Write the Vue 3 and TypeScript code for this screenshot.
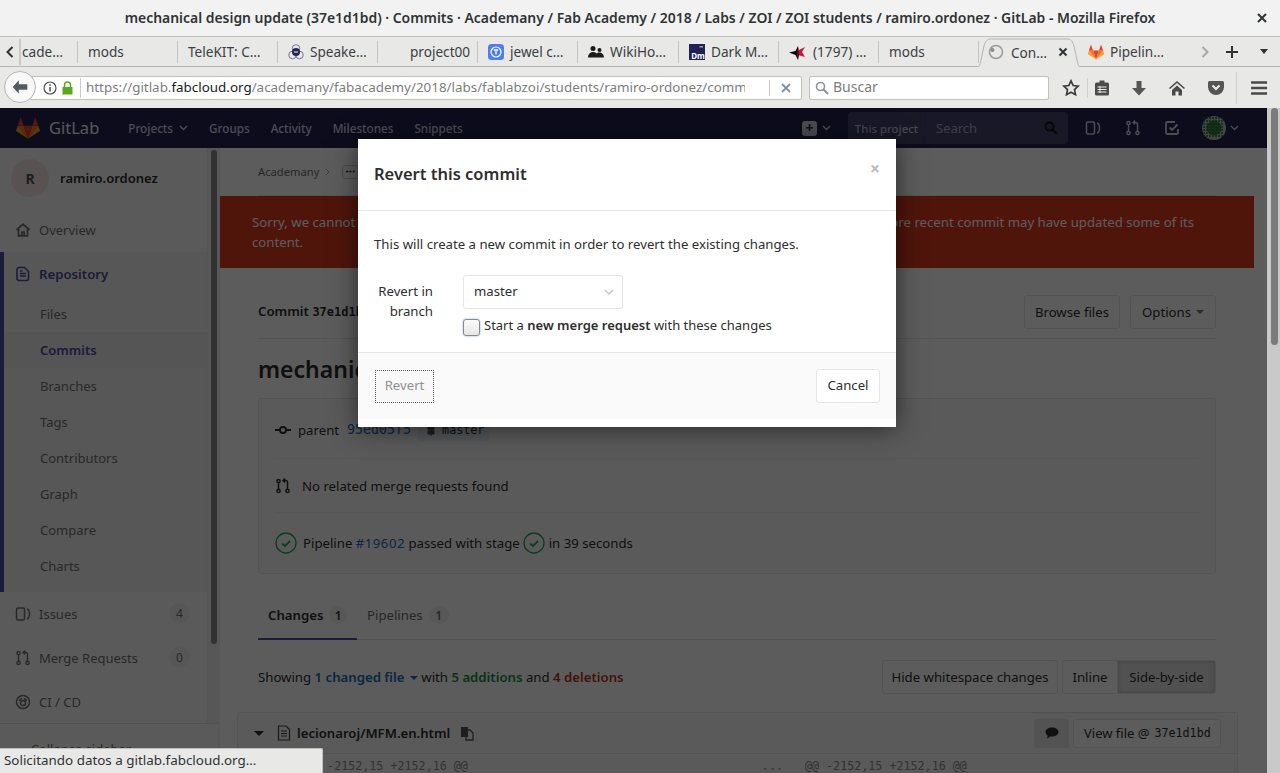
<script setup lang="ts">
const icons: Record<string, string> = {
  home: 'M1.500 8 8 2.200 14.500 8M3.500 7v6.800h9V7M6.800 13.800v-3.600h2.400v3.600',
  doc: 'M4 1.500h5.500l4 4V12.500a2 2 0 0 1-2 2H4a2 2 0 0 1-2-2v-9a2 2 0 0 1 2-2zM5 7.500h6M5 10h6M5 5h2.500',
  issue: 'M3 2h5a1.500 1.500 0 0 1 1.500 1.500v9A1.500 1.500 0 0 1 8 14H3a1.500 1.500 0 0 1-1.500-1.500v-9A1.500 1.500 0 0 1 3 2zM12 3c2 .6 2.500 2.400 2.500 5s-.5 4.400-2.500 5',
  merge: 'M3.500 4.700a1.600 1.600 0 1 0 0-3.200 1.600 1.600 0 0 0 0 3.200zM3.500 14.500a1.600 1.600 0 1 0 0-3.200 1.600 1.600 0 0 0 0 3.200zM3.500 4.700v6.600M12.500 14.500a1.600 1.600 0 1 0 0-3.200 1.600 1.600 0 0 0 0 3.200zM12.500 11.300V4a1.500 1.500 0 0 0-1.500-1.500H8M10 .5l-2 2 2 2',
  ci: 'M8 1.500a6.500 6.500 0 1 0 0 13 6.500 6.500 0 0 0 0-13zM8 6.500a2.500 2.500 0 1 0 0 5 2.500 2.500 0 0 0 0-5zM4.500 7A3.500 3.500 0 0 1 7 4.500M9 4.500A3.500 3.500 0 0 1 11.500 7',
}
const repoItems = ['Files', 'Commits', 'Branches', 'Tags', 'Contributors', 'Graph', 'Compare', 'Charts']
const navLinks = [
  { label: 'Projects', caret: true },
  { label: 'Groups', caret: false },
  { label: 'Activity', caret: false },
  { label: 'Milestones', caret: false },
  { label: 'Snippets', caret: false },
]
const tabs = [
  { label: 'cade…', icon: '', width: 58 },
  { label: 'mods', icon: '', width: 100 },
  { label: 'TeleKIT: C…', icon: '', width: 100 },
  { label: 'Speake…', icon: 'speaker', width: 100 },
  { label: 'project00', icon: 'blank', width: 100 },
  { label: 'jewel c…', icon: 'jewel', width: 100 },
  { label: 'WikiHo…', icon: 'wiki', width: 101 },
  { label: 'Dark M…', icon: 'dark', width: 100 },
  { label: '(1797) …', icon: 'star', width: 100 },
  { label: 'mods', icon: '', width: 100 },
]
const avatarDots: { x: number; y: number }[] = []
for (let x = 2; x <= 22; x += 3) {
  for (let y = 2; y <= 22; y += 3) {
    avatarDots.push({ x, y })
  }
}
</script>

<template>
  <div class="window">
    <header class="titlebar">
      <span class="title">mechanical design update (37e1d1bd) · Commits · Academany / Fab Academy / 2018 / Labs / ZOI / ZOI students / ramiro.ordonez · GitLab - Mozilla Firefox</span>
      <svg class="win-close" width="10" height="10" viewBox="0 0 10 10"><path d="M1 1l8 8M9 1l-8 8" stroke="#2e3436" stroke-width="2" /></svg>
    </header>

    <div class="tabbar">
      <svg class="tab-scroll" width="8" height="12" viewBox="0 0 8 12"><path d="M6.500 1 1.500 6l5 5" fill="none" stroke="#2e3436" stroke-width="2" /></svg>
      <div class="tab-fade"></div>
      <div v-for="(t, idx) in tabs" :key="t.label + t.width" class="tab" :class="{ first: idx === 0 }" :style="{ width: t.width + 'px' }">
        <svg v-if="t.icon === 'speaker'" width="16" height="16" viewBox="0 0 16 16"><circle cx="8" cy="4.500" r="3.800" fill="none" stroke="#5a5a8c" stroke-width=".8" /><circle cx="4.500" cy="11" r="3.800" fill="none" stroke="#5a5a8c" stroke-width=".8" /><circle cx="11.500" cy="11" r="3.800" fill="none" stroke="#5a5a8c" stroke-width=".8" /><circle cx="8" cy="8" r="4" fill="#26264e" /><path d="M6 7h4v2H6z" fill="#8b8bb5" /></svg>
        <span v-else-if="t.icon === 'blank'" class="blank-ic"></span>
        <svg v-else-if="t.icon === 'jewel'" width="16" height="16" viewBox="0 0 16 16"><rect width="16" height="16" rx="3.500" fill="#4f7cf0" /><circle cx="8" cy="8" r="5" fill="none" stroke="#fff" stroke-width="1.200" /><path d="M5.800 6h4.400M8 6v4.500" stroke="#fff" stroke-width="1.300" /></svg>
        <svg v-else-if="t.icon === 'wiki'" width="16" height="14" viewBox="0 0 16 14"><circle cx="5" cy="3.500" r="2.500" fill="#1b1b1b" /><circle cx="11.500" cy="5" r="2" fill="#1b1b1b" /><path d="M0 12.500C0 9.500 2 7 5 7c2 0 3 1 3.500 1.500C9 8 10 7.500 11.500 7.500 14 7.500 16 10 16 12.500z" fill="#1b1b1b" /></svg>
        <svg v-else-if="t.icon === 'dark'" width="16" height="16" viewBox="0 0 16 16"><rect width="16" height="16" fill="#1d2154" /><rect x="10.500" y="2" width="3.500" height="1.500" fill="#9a9ab5" /></svg>
        <svg v-else-if="t.icon === 'star'" width="18" height="18" viewBox="0 0 18 18"><path d="M0 9.500 6.500 8 9 3v14l-2.500-5z" fill="#000" /><path d="M9 3l1 4 6-3-3 5 3 5-7-2-1 5z" fill="#d0103a" /><path d="M9 3v14l1-5-1-5z" fill="#000" /></svg>
        <span v-if="t.icon === 'dark'" class="dm-text">Dm</span>
        <span class="tab-label">{{ t.label }}</span>
      </div>
      <div class="tab-active">
        <svg class="tab-shape" width="112" height="31" viewBox="0 0 112 31"><path d="M0 30h2c4 0 5-3 6-8l3-14c1-4 3-7 7-7h76c4 0 6 3 7 7l3 14c1 5 2 8 6 8h2" fill="#e8e8e7" stroke="#b5b5b3" /></svg>
        <svg class="spinner" width="16" height="16" viewBox="0 0 16 16"><circle cx="8" cy="8" r="6.500" fill="none" stroke="#9a9a9a" stroke-width="1.500" /><circle cx="4.500" cy="6" r="2" fill="#8c8c8c" /></svg>
        <span class="tab-label">Con…</span>
        <svg class="tab-x" width="10" height="10" viewBox="0 0 10 10"><path d="M1.500 1.500l7 7M8.500 1.500l-7 7" stroke="#2e3436" stroke-width="2" /></svg>
      </div>
      <div class="tab-pipe">
        <svg width="18" height="18" viewBox="0 0 24 24"><path d="M12 22 16 10H8z" fill="#e24329" /><path d="M12 22 8 10H2.500z" fill="#fc6d26" /><path d="M2.500 10 1 14.600l11 7.400z" fill="#fca326" /><path d="M2.500 10H8L5.300 2z" fill="#e24329" /><path d="M12 22l4-12h5.500z" fill="#fc6d26" /><path d="M21.500 10 23 14.600 12 22z" fill="#fca326" /><path d="M21.500 10H16l2.700-8z" fill="#e24329" /></svg>
        <span class="tab-label">Pipelin…</span>
      </div>
      <div class="tab-tools">
        <svg width="8" height="12" viewBox="0 0 8 12"><path d="M1.500 1l5 5-5 5" fill="none" stroke="#a8a8a8" stroke-width="2" /></svg>
        <svg width="14" height="14" viewBox="0 0 14 14"><path d="M7 1v12M1 7h12" stroke="#2e3436" stroke-width="2" /></svg>
        <svg width="8" height="5" viewBox="0 0 8 5"><path d="M0 0h8L4 5z" fill="#2e3436" /></svg>
      </div>
    </div>

    <div class="navbar">
      <div class="back"><svg width="18" height="16" viewBox="0 0 16 14"><path d="M7 1 1.500 7 7 13V9.500h7.500v-5H7z" fill="#55595c" /></svg></div>
      <div class="urlbar">
        <svg width="14" height="14" viewBox="0 0 14 14"><circle cx="7" cy="7" r="6" fill="none" stroke="#4c4c4c" stroke-width="1.200" /><path d="M7 6v4.500M7 3.200v1.500" stroke="#4c4c4c" stroke-width="1.500" /></svg>
        <svg class="lock" width="11" height="14" viewBox="0 0 11 14"><path d="M0.500 6h10v7.500H.5z" fill="#5ca51e" /><path d="M2.500 6.500V4a3 3 0 0 1 6 0v2.500" fill="none" stroke="#5ca51e" stroke-width="1.500" /></svg>
        <span class="url-sep"></span>
        <span class="url"><span class="u-dim">https://gitlab.</span><span class="u-main">fabcloud.org</span><span class="u-dim">/academany/fabacademy/2018/labs/fablabzoi/students/ramiro-ordonez/commit/37e1d1bd</span></span>
        <span class="url-sep2"></span>
        <svg width="10" height="10" viewBox="0 0 10 10"><path d="M1 1l8 8M9 1l-8 8" stroke="#7a8fa8" stroke-width="1.800" /></svg>
      </div>
      <div class="searchbar">
        <svg width="14" height="14" viewBox="0 0 14 14"><circle cx="5.500" cy="5.500" r="4" fill="none" stroke="#8d9296" stroke-width="1.600" /><path d="M8.500 8.500l4.500 4.500" stroke="#8d9296" stroke-width="2" /></svg>
        <span>Buscar</span>
      </div>
      <div class="tools">
        <svg class="t-star" width="18" height="18" viewBox="0 0 18 18"><path d="M9 1.800l2.200 4.700 5 .6-3.700 3.500 1 5.100L9 13.200l-4.500 2.500 1-5.100L1.800 7.100l5-.6z" fill="none" stroke="#3b3b3b" stroke-width="1.700" /></svg>
        <span class="t-sep"></span>
        <svg class="t-clip" width="14" height="16" viewBox="0 0 14 16"><rect x="0" y="2.500" width="14" height="13" rx="1.500" fill="#4a4a4a" /><rect x="4.500" y=".5" width="5" height="3" fill="#4a4a4a" /><path d="M2.500 7h9M2.500 9.500h9M2.500 12h9M5 6v7" stroke="#e8e8e7" stroke-width="1" /></svg>
        <svg class="t-down" width="14" height="16" viewBox="0 0 14 16"><path d="M4.500 1h5v7H14l-7 7.500L0 8h4.500z" fill="#555" /></svg>
        <svg class="t-home" width="16" height="16" viewBox="0 0 16 16"><path d="M8 1 0 8l1 1 7-6 7 6 1-1z" fill="#4a4a4a" /><path d="M3 10 8 5.500 13 10v5.500H9.500v-4h-3v4H3z" fill="#4a4a4a" /></svg>
        <svg class="t-pocket" width="16" height="15" viewBox="0 0 16 15"><path d="M1.500 1h13A1.500 1.500 0 0 1 16 2.500V7a8 8 0 0 1-16 0V2.500A1.500 1.500 0 0 1 1.500 1z" fill="#555" /><path d="M4.500 5.500 8 9l3.500-3.500" fill="none" stroke="#e8e8e7" stroke-width="2.200" /></svg>
        <span class="t-sep2"></span>
        <svg class="t-menu" width="16" height="14" viewBox="0 0 16 14"><path d="M0 1.500h16M0 7h16M0 12.500h16" stroke="#4a4a4a" stroke-width="2.500" /></svg>
      </div>
    </div>

    <div class="viewport">
      <div class="page">
        <div class="gl-nav">
          <svg class="gl-logo" width="28" height="26" viewBox="0 0 24 24"><path d="M12 22 16 10H8z" fill="#e24329" /><path d="M12 22 8 10H2.500z" fill="#fc6d26" /><path d="M2.500 10 1 14.600l11 7.400z" fill="#fca326" /><path d="M2.500 10H8L5.300 2z" fill="#e24329" /><path d="M12 22l4-12h5.500z" fill="#fc6d26" /><path d="M21.500 10 23 14.600 12 22z" fill="#fca326" /><path d="M21.500 10H16l2.700-8z" fill="#e24329" /></svg>
          <span class="gl-name">GitLab</span>
          <div class="gl-links">
            <span v-for="l in navLinks" :key="l.label" class="gl-link">{{ l.label }}<svg v-if="l.caret" width="9" height="6" viewBox="0 0 9 6"><path d="M1 1l3.500 3.500L8 1" fill="none" stroke="#d4d4e4" stroke-width="1.300" /></svg></span>
          </div>
          <div class="gl-right">
            <span class="plus-box">+</span>
            <svg class="gl-chev" width="9" height="6" viewBox="0 0 9 6"><path d="M1 1l3.500 3.500L8 1" fill="none" stroke="#d4d4e4" stroke-width="1.300" /></svg>
            <div class="gl-search">
              <span class="this-project">This project</span>
              <span class="s-ph">Search</span>
              <svg width="14" height="14" viewBox="0 0 14 14"><circle cx="5.500" cy="5.500" r="4" fill="none" stroke="#111" stroke-width="2" /><path d="M8.500 8.500l4 4" stroke="#111" stroke-width="2.400" /></svg>
            </div>
            <svg class="gl-i1" width="16" height="16" viewBox="0 0 16 16"><path :d="icons.issue" fill="none" stroke="#d4d4e4" stroke-width="1.500" /></svg>
            <svg class="gl-i2" width="16" height="16" viewBox="0 0 16 16"><path :d="icons.merge" fill="none" stroke="#d4d4e4" stroke-width="1.400" /></svg>
            <svg class="gl-i3" width="16" height="16" viewBox="0 0 16 16"><path d="M14 9v3.500a1.500 1.500 0 0 1-1.500 1.500h-9A1.500 1.500 0 0 1 2 12.500v-9A1.500 1.500 0 0 1 3.500 2H11M5.500 7.500l2.500 2.500 5.500-5.500" fill="none" stroke="#d4d4e4" stroke-width="1.800" /></svg>
            <svg class="gl-av" width="24" height="24" viewBox="0 0 24 24"><circle cx="12" cy="12" r="12" fill="#bdbdb5" /><circle cx="12" cy="12" r="7.500" fill="#2f8a3f" /><circle v-for="d in avatarDots" :key="d.x + '-' + d.y" :cx="d.x" :cy="d.y" r=".9" fill="#1d6a2a" /></svg>
            <svg class="gl-chev2" width="9" height="6" viewBox="0 0 9 6"><path d="M1 1l3.500 3.500L8 1" fill="none" stroke="#d4d4e4" stroke-width="1.300" /></svg>
          </div>
        </div>

        <div class="gl-body">
          <aside class="sidebar">
            <div class="side-inner">
              <div class="context"><span class="ctx-av">R</span><span class="ctx-name">ramiro.ordonez</span></div>
              <div class="side-row top"><svg width="16" height="16" viewBox="0 0 16 16"><path :d="icons.home" fill="none" stroke="#707070" stroke-width="1.700" /></svg><span>Overview</span></div>
              <div class="repo">
                <div class="repo-head"><svg width="16" height="16" viewBox="0 0 16 16"><path :d="icons.doc" fill="none" stroke="#4b4ba3" stroke-width="1.600" /></svg><span>Repository</span></div>
                <div v-for="i in repoItems" :key="i" class="repo-item" :class="{ on: i === 'Commits' }">{{ i }}</div>
              </div>
              <div class="side-row tall"><svg width="16" height="16" viewBox="0 0 16 16"><path :d="icons.issue" fill="none" stroke="#707070" stroke-width="1.500" /></svg><span>Issues</span><em>4</em></div>
              <div class="side-row tall"><svg width="16" height="16" viewBox="0 0 16 16"><path :d="icons.merge" fill="none" stroke="#707070" stroke-width="1.400" /></svg><span>Merge Requests</span><em>0</em></div>
              <div class="side-row tall"><svg width="16" height="16" viewBox="0 0 16 16"><path :d="icons.ci" fill="none" stroke="#707070" stroke-width="1.500" /></svg><span>CI / CD</span></div>
              <div class="collapse"><span class="coll-ic">«</span><span>Collapse sidebar</span></div>
            </div>
            <div class="side-track"><div class="side-thumb"></div></div>
          </aside>

          <main class="main">
            <div class="crumbs">
              <span>Academany</span>
              <svg width="6" height="8" viewBox="0 0 6 8"><path d="M1 1l3 3-3 3" fill="none" stroke="#aaa" stroke-width="1" /></svg>
              <span class="crumb-more"><svg width="9" height="3" viewBox="0 0 9 3"><circle cx="1.200" cy="1.500" r="1.100" fill="#2e2e2e" /><circle cx="4.500" cy="1.500" r="1.100" fill="#2e2e2e" /><circle cx="7.800" cy="1.500" r="1.100" fill="#2e2e2e" /></svg></span>
            </div>
            <div class="alert">Sorry, we cannot revert this commit automatically. This commit may already have been reverted, or a more recent commit may have updated some of its content.</div>

            <div class="container">
              <div class="commit-head">
                <div class="commit-id">Commit <code>37e1d1bd</code></div>
                <div class="head-btns"><span class="btn">Browse files</span><span class="btn opt">Options <i class="caret"></i></span></div>
              </div>
              <h3 class="commit-title">mechanical design update</h3>

              <section class="info">
                <div class="info-row r1">
                  <svg width="16" height="16" viewBox="0 0 16 16"><circle cx="8" cy="8" r="3" fill="none" stroke="#2e2e2e" stroke-width="1.800" /><path d="M0 8h5M11 8h5" stroke="#2e2e2e" stroke-width="1.800" /></svg>
                  <span class="p-lbl">parent</span><code class="p-hash">95ed05f5</code>
                  <span class="p-branch"><svg width="8" height="12" viewBox="0 0 8 12"><path d="M4 0v12M1 3h6v3H1zM1 7h6v3H1z" fill="#555" stroke="#555" /></svg><code>master</code></span>
                </div>
                <div class="info-row r2">
                  <svg width="16" height="16" viewBox="0 0 16 16"><path :d="icons.merge" fill="none" stroke="#2e2e2e" stroke-width="1.500" /></svg>
                  <span class="p-mr">No related merge requests found</span>
                </div>
                <div class="info-row r3">
                  <svg class="chk" width="22" height="22" viewBox="0 0 22 22"><circle cx="11" cy="11" r="10" fill="none" stroke="#1aaa55" stroke-width="1.300" /><path d="M7 11.500l3 2.500 5-5" fill="none" stroke="#1aaa55" stroke-width="1.800" /></svg>
                  <span class="p-pipe">Pipeline <a>#19602</a> passed with stage</span>
                  <svg class="chk c2" width="22" height="22" viewBox="0 0 22 22"><circle cx="11" cy="11" r="10" fill="none" stroke="#1aaa55" stroke-width="1.300" /><path d="M7 11.500l3 2.500 5-5" fill="none" stroke="#1aaa55" stroke-width="1.800" /></svg>
                  <span class="p-time">in 39 seconds</span>
                </div>
              </section>

              <div class="subtabs">
                <div class="subtab on">Changes <b>1</b></div>
                <div class="subtab">Pipelines <b>1</b></div>
              </div>

              <div class="stats">
                <div class="stat-text">Showing <a class="lnk">1 changed file <i class="caret blue"></i></a> with <strong class="add">5 additions</strong> and <strong class="del">4 deletions</strong></div>
                <div class="stat-btns">
                  <span class="btn b-hide">Hide whitespace changes</span>
                  <div class="seg"><span class="btn b-inline">Inline</span><span class="btn pressed">Side-by-side</span></div>
                </div>
              </div>
            </div>

            <section class="file">
              <div class="file-head">
                <i class="caret dark"></i>
                <svg class="f-ic" width="14" height="16" viewBox="0 0 14 16"><path d="M1.500 1h7.500l3.500 3.500V15h-11zM4 6h6M4 8.500h6M4 11h6" fill="none" stroke="#444" stroke-width="1.200" /></svg>
                <strong>lecionaroj/MFM.en.html</strong>
                <svg class="f-copy" width="14" height="16" viewBox="0 0 14 16"><path d="M1 2h7v10H1z" fill="#555" /><path d="M6 5h4l3 3v7H6z" fill="none" stroke="#555" stroke-width="1.300" /></svg>
                <span class="btn cmt"><svg width="14" height="12" viewBox="0 0 14 12"><path d="M7 .5c3.600 0 6.500 2 6.500 4.500S10.600 9.500 7 9.500c-.6 0-1.200 0-1.700-.2C4.300 10.500 2.800 11.200 1.500 11.400c.7-.8 1.200-1.800 1.200-2.800C1.300 7.800.5 6.500.5 5 .5 2.500 3.400.500 7 .5z" fill="#2e2e2e" /></svg></span>
                <span class="btn vf">View file @ <code>37e1d1bd</code></span>
              </div>
              <div class="diff-line">
                <code class="d-left">@@ -2152,15 +2152,16 @@</code>
                <code class="d-dots">...</code>
                <code class="d-right">@@ -2152,15 +2152,16 @@</code>
              </div>
            </section>
          </main>
        </div>
      </div>

      <div class="backdrop"></div>

      <div class="modal">
        <div class="m-head"><h4>Revert this commit</h4><span class="m-x">×</span></div>
        <div class="m-body">
          <p>This will create a new commit in order to revert the existing changes.</p>
          <div class="m-form">
            <label>Revert in branch</label>
            <div class="m-fields">
              <div class="m-select"><span>master</span><svg width="10" height="6" viewBox="0 0 10 6"><path d="M1 1l4 4 4-4" fill="none" stroke="#c4c4c4" stroke-width="1.300" /></svg></div>
              <div class="m-check"><span class="box"></span><span>Start a <strong>new merge request</strong> with these changes</span></div>
            </div>
          </div>
        </div>
        <div class="m-foot"><span class="m-revert">Revert</span><span class="m-cancel">Cancel</span></div>
      </div>

      <div class="scroll"><div class="scroll-thumb"></div></div>
      <div class="status">Solicitando datos a gitlab.fabcloud.org…</div>
    </div>
  </div>
</template>

<style>
html, body { margin: 0; padding: 0; overflow: hidden; }
</style>

<style scoped>
.window { width: 1280px; height: 773px; overflow: hidden; display: flex; flex-direction: column; font-family: "Noto Sans", sans-serif; font-size: 13.2px; color: #2e2e2e; background: #e8e8e7; }
code { font-family: "DejaVu Sans Mono", monospace; font-size: 12px; }

.titlebar { height: 36px; flex: none; background: #f2f2f2; border-bottom: 1px solid #bfbfbd; display: flex; align-items: center; justify-content: center; position: relative; box-sizing: content-box; }
.title { font-size: 13.93px; font-weight: 600; color: #2e3436; white-space: nowrap; padding-bottom: 2px; }
.win-close { position: absolute; right: 13px; top: 13px; }

.tabbar { height: 29px; flex: none; display: flex; align-items: center; background: #e8e8e7; border-bottom: 1px solid #b5b5b3; position: relative; padding-left: 20px; box-sizing: content-box; font-size: 13.6px; color: #3b3f41; }
.tab-scroll { position: absolute; left: 6px; top: 9px; }
.tab-fade { position: absolute; left: 19px; top: 2px; width: 2px; height: 26px; background: #c9c9c7; }
.tab { height: 22px; flex: none; display: flex; align-items: center; gap: 6px; box-sizing: border-box; border-right: 1px solid #c4c4c2; padding-left: 10px; white-space: nowrap; overflow: hidden; position: relative; }
.tab.first { padding-left: 2px; }
.blank-ic { width: 16px; height: 16px; }
.dm-text { position: absolute; left: 11px; top: 11px; width: 16px; text-align: center; color: #fff; font-size: 8px; font-weight: 700; line-height: 8px; }
.tab-active { width: 101px; height: 29px; flex: none; display: flex; align-items: center; position: relative; margin-bottom: -1px; }
.tab-shape { position: absolute; left: -6px; top: 0; }
.spinner { position: relative; margin-left: 9px; }
.tab-active .tab-label { position: relative; margin-left: 7px; }
.tab-x { position: relative; margin-left: 11px; }
.tab-pipe { width: 106px; flex: none; display: flex; align-items: center; gap: 5px; padding-left: 7px; box-sizing: border-box; }
.tab-tools { display: flex; align-items: center; }
.tab-tools svg:nth-child(1) { margin-left: 15px; }
.tab-tools svg:nth-child(2) { margin-left: 16px; }
.tab-tools svg:nth-child(3) { margin-left: 21px; }

.navbar { height: 41px; flex: none; display: flex; align-items: center; background: #e8e8e7; position: relative; padding-left: 30px; box-sizing: border-box; }
.back { position: absolute; left: 4px; top: 4px; width: 32px; height: 32px; border-radius: 50%; background: #f8f8f8; border: 1px solid #b5b5b3; box-sizing: border-box; display: flex; align-items: center; justify-content: center; z-index: 1; }
.urlbar { width: 772px; height: 24px; box-sizing: border-box; background: #fff; border: 1px solid #c0c0be; border-radius: 0 2px 2px 0; display: flex; align-items: center; padding: 0 10px 0 12px; font-size: 13.4px; white-space: nowrap; }
.lock { margin-left: 5px; }
.url-sep { width: 1px; height: 20px; background: #ccc; margin: 0 5px 0 7px; flex: none; }
.url { flex: 1; overflow: hidden; white-space: nowrap; padding-bottom: 2px; }
.u-dim { color: #7d7d7d; }
.u-main { color: #1a1a1a; }
.url-sep2 { width: 1px; height: 16px; background: #c8c8c8; margin: 0 11px 0 24px; flex: none; }
.searchbar { margin-left: 7px; width: 240px; height: 24px; box-sizing: border-box; background: #fff; border: 1px solid #c0c0be; border-radius: 2px; display: flex; align-items: center; gap: 4px; padding-left: 5px; font-size: 14px; color: #7d7d7d; }
.searchbar span { padding-bottom: 2px; }
.tools { display: flex; align-items: center; margin-left: 13px; position: relative; }
.t-sep { width: 1px; height: 20px; background: #cfcfcd; margin: 0 7px; }
.t-down { margin-left: 23px; }
.t-home { margin-left: 23px; }
.t-pocket { margin-left: 23px; }
.t-sep2 { width: 1px; height: 32px; background: #cfcfcd; margin-left: 12px; }
.t-menu { margin-left: 14px; }

.viewport { flex: 1; position: relative; overflow: hidden; background: #fff; }
.page { position: absolute; inset: 0 13px 0 0; overflow: hidden; display: flex; flex-direction: column; background: #fff; }
.backdrop { position: absolute; inset: 0 13px 0 0; background: rgba(0, 0, 0, .64); }

.gl-nav { height: 40px; flex: none; background: #252350; display: flex; align-items: center; color: #d4d4e4; font-size: 11.7px; font-weight: 500; padding-left: 14px; }
.gl-name { font-size: 16.5px; font-weight: 400; margin-left: 7px; color: #f0f0f4; padding-bottom: 2px; }
.gl-links { display: flex; margin-left: 29px; gap: 21px; }
.gl-link { display: flex; align-items: center; gap: 6px; white-space: nowrap; }
.gl-right { margin-left: auto; display: flex; align-items: center; }
.plus-box { width: 15px; height: 15px; border-radius: 3px; background: #d4d4e4; color: #252350; font-weight: 700; font-size: 14px; display: flex; align-items: center; justify-content: center; line-height: 1; }
.gl-chev { margin-left: 5px; }
.gl-search { width: 220px; height: 32px; margin-left: 17px; border-radius: 4px; background: #45446e; display: flex; align-items: center; }
.this-project { width: 78px; height: 32px; box-sizing: border-box; border-right: 1px solid #3d3c78; display: flex; align-items: center; justify-content: center; color: #c4c4d8; white-space: nowrap; font-size: 11.4px; }
.s-ph { margin-left: 10px; font-size: 13px; font-weight: 400; color: #a8a8c8; flex: 1; }
.gl-search svg { margin-right: 10px; }
.gl-i1 { margin-left: 17px; }
.gl-i2 { margin-left: 24px; }
.gl-i3 { margin-left: 23px; }
.gl-av { margin-left: 22px; }
.gl-chev2 { margin-left: 4px; margin-right: 28px; }

.gl-body { flex: 1; display: flex; min-height: 0; }
.sidebar { width: 220px; flex: none; display: flex; background: #fafafa; position: relative; overflow: hidden; }
.side-inner { width: 207px; flex: none; height: 100%; display: flex; flex-direction: column; font-size: 13px; color: #707070; overflow: hidden; }
.side-track { width: 13px; flex: none; background: #f2f2f2; border-left: 1px solid #ececec; box-sizing: border-box; display: flex; justify-content: center; }
.side-thumb { width: 6px; height: 494px; background: #8a8a8a; border-radius: 3px; margin-top: 2px; }
.context { height: 60px; flex: none; display: flex; align-items: center; padding-left: 11px; box-sizing: border-box; }
.ctx-av { width: 38px; height: 38px; border-radius: 50%; background: #f3e6e3; color: #555; font-weight: 700; font-size: 14px; display: flex; align-items: center; justify-content: center; }
.ctx-name { margin-left: 11px; color: #2e2e2e; font-weight: 600; }
.side-row { display: flex; align-items: center; padding-left: 15px; gap: 8px; flex: none; }
.side-row.top { height: 44px; }
.side-row.tall { height: 44px; position: relative; }
.side-row em { position: absolute; right: 17px; top: 11px; width: 21px; height: 20px; border-radius: 10px; background: #eee; font-style: normal; font-size: 12px; display: flex; align-items: center; justify-content: center; }
.repo { flex: none; height: 340px; border-left: 4px solid #4b4ba3; background: #f2f2f2; box-sizing: border-box; }
.repo-head { height: 44px; display: flex; align-items: center; gap: 8px; padding-left: 11px; color: #4b4ba3; font-weight: 600; font-size: 13.2px; }
.repo-item { height: 36px; display: flex; align-items: center; padding-left: 36px; }
.repo-item.on { background: #eaeaea; color: #4b4ba3; font-weight: 600; }
.collapse { position: absolute; left: 0; bottom: 0; width: 218px; height: 50px; border-top: 1px solid #e0e0e0; box-sizing: border-box; background: #fafafa; display: flex; align-items: center; gap: 8px; padding-left: 16px; }

.main { flex: 0 0 1034px; min-width: 0; overflow: hidden; }
.crumbs { height: 48px; margin: 0 38px; display: flex; align-items: center; gap: 6px; font-size: 11.2px; color: #707070; box-sizing: border-box; border-bottom: 1px solid #e5e5e5; }
.crumb-more { width: 17px; height: 14px; box-sizing: border-box; border: 1px solid #ccc; border-radius: 3px; display: flex; align-items: center; justify-content: center; margin-left: 5px; }
.alert { height: 72px; box-sizing: border-box; background: #db3b21; color: #fff; padding: 16px 32px; line-height: 20px; }
.container { margin: 0 38px; }
.commit-head { height: 71px; display: flex; align-items: center; justify-content: space-between; border-bottom: 1px solid #e5e5e5; padding-top: 17px; box-sizing: border-box; }
.commit-id { font-weight: 600; margin-bottom: 2px; }
.commit-id code { font-weight: 700; }
.head-btns { display: flex; gap: 10px; }
.btn { height: 34px; box-sizing: border-box; border: 1px solid #e5e5e5; border-radius: 3px; background: #fff; padding: 0 10px; display: inline-flex; align-items: center; gap: 5px; white-space: nowrap; font-size: 13.2px; }
.btn.opt { width: 86px; justify-content: center; }
.caret { display: inline-block; border: 4px solid transparent; border-top-color: #707070; border-bottom: 0; }
.caret.blue { border-top-color: #1b69b6; margin-left: 2px; vertical-align: 2px; }
.caret.dark { border-width: 5px; border-bottom: 0; border-top-color: #2e2e2e; }
.commit-title { margin: 0; height: 59px; display: flex; align-items: center; font-size: 23px; font-weight: 600; }
.info { height: 176px; border: 1px solid #e5e5e5; border-radius: 3px; box-sizing: border-box; padding: 0 16px; background: #fafafa; }
.info-row { display: flex; align-items: center; box-sizing: border-box; }
.r1 { height: 60px; gap: 7px; border-bottom: 1px solid #eee; padding-top: 2px; }
.r2 { height: 54px; gap: 11px; border-bottom: 1px solid #eee; padding-top: 1px; }
.r3 { height: 60px; gap: 6px; padding-bottom: 1px; }
.c2 { margin-left: -3px; }
.p-time { margin-left: -2px; }
.p-hash { color: #1b69b6; margin-left: 1px; font-size: 13.3px; }
.p-branch { display: inline-flex; align-items: center; gap: 7px; background: #e8f0f5; border-radius: 3px; padding: 2px 5px 2px 9px; height: 22px; box-sizing: border-box; }
.p-branch code { font-size: 11.7px; }
a { color: #1b69b6; }
.p-pipe a { letter-spacing: .5px; }
.subtabs { height: 66px; display: flex; align-items: flex-end; gap: 0; border-bottom: 1px solid #e5e5e5; box-sizing: border-box; }
.subtab { height: 42px; padding: 0 10px; display: flex; align-items: flex-start; gap: 6px; color: #707070; white-space: nowrap; padding-top: 9px; box-sizing: border-box; }
.subtab.on { color: #2e2e2e; font-weight: 600; width: 99px; border-bottom: 2px solid #4b4ba3; margin-bottom: -1px; height: 43px; }
.subtab b { width: 20px; height: 18px; border-radius: 9px; background: #f0f0f0; font-size: 12px; font-weight: 600; display: inline-flex; align-items: center; justify-content: center; }
.stats { height: 72px; display: flex; align-items: center; justify-content: space-between; padding-top: 1px; box-sizing: border-box; }
.lnk { color: #1b69b6; font-weight: 600; }
.add { color: #168f48; font-weight: 600; }
.del { color: #c0341d; font-weight: 600; }
.stat-btns { display: flex; gap: 4px; }
.stat-btns .btn { padding: 0; justify-content: center; }
.b-hide { width: 176px; }
.b-inline { width: 55px; }
.pressed { width: 99px; }
.seg { display: flex; }
.seg .btn:first-child { border-radius: 3px 0 0 3px; border-right: 0; }
.seg .pressed { border-radius: 0 3px 3px 0; background: #e0e0e0; box-shadow: inset 0 0 4px rgba(0, 0, 0, .2); }
.file { margin: 0 16px 0 17px; border: 1px solid #e5e5e5; border-radius: 3px; }
.file-head { height: 41px; background: #fafafa; display: flex; align-items: center; padding: 0 16px; border-bottom: 1px solid #e5e5e5; box-sizing: border-box; font-size: 13px; }
.f-ic { margin-left: 13px; }
.file-head strong { margin-left: 6px; font-weight: 600; font-size: 13.15px; }
.f-copy { margin-left: 10px; }
.cmt { margin-left: auto; width: 35px; height: 29px; background: #e5e5e5; justify-content: center; padding: 0; }
.vf { margin-left: 4px; height: 29px; width: 148px; font-size: 13px; }
.vf code { font-size: 11.7px; }
.diff-line { height: 24px; display: flex; align-items: center; position: relative; color: #8a8a8a; background: #fafafa; }
.diff-line code { font-size: 11.7px; }
.d-left { margin-left: 68px; }
.d-dots { margin-left: 294px; }
.d-right { margin-left: 22px; }

.modal { position: absolute; left: 358px; top: 31px; width: 538px; height: 288px; background: #fff; box-shadow: 0 2px 24px rgba(0, 0, 0, .55); display: flex; flex-direction: column; }
.m-head { height: 72px; box-sizing: border-box; border-bottom: 1px solid #e5e5e5; padding: 0 16px; display: flex; align-items: flex-start; justify-content: space-between; }
.m-head h4 { margin: 23px 0 0; font-size: 16.5px; font-weight: 600; color: #2e2e2e; }
.m-x { color: #bbb; font-size: 18px; font-weight: 700; margin-top: 20px; line-height: 1; }
.m-body { height: 142px; box-sizing: border-box; padding: 23px 16px 0; border-bottom: 1px solid #e5e5e5; }
.m-body p { margin: 0 0 21px; line-height: 20px; }
.m-form { display: flex; }
.m-form label { width: 59px; margin-right: 30px; text-align: right; line-height: 20px; margin-top: 6px; }
.m-select { width: 160px; height: 34px; box-sizing: border-box; border: 1px solid #e5e5e5; border-radius: 3px; display: flex; align-items: center; justify-content: space-between; padding: 0 8px 0 10px; }
.m-select span { padding-bottom: 3px; }
.m-check { display: flex; gap: 4px; margin-top: 6px; line-height: 20px; margin-left: 0; font-size: 13px; }
.box { width: 15px; height: 15px; margin-top: 4px; border: 1px solid #888; border-radius: 3px; background: linear-gradient(#fbfbfb, #e6e6e6); box-shadow: 0 0 2px #7aa5d8; flex: none; }
.m-check strong { font-weight: 600; }
.m-foot { height: 66px; box-sizing: border-box; background: #fafafa; display: flex; align-items: center; justify-content: space-between; padding: 0 16px 0 17px; }
.m-revert { width: 59px; height: 33px; box-sizing: border-box; border: 1px dotted #555; display: flex; align-items: center; justify-content: center; color: #919191; background: #f8f8f8; padding-bottom: 2px; }
.m-cancel { width: 64px; height: 34px; box-sizing: border-box; border: 1px solid #e5e5e5; border-radius: 3px; background: #fff; display: flex; align-items: center; justify-content: center; padding-bottom: 2px; }

.scroll { position: absolute; right: 0; top: 0; bottom: 0; width: 13px; background: #c9c9c9; }
.scroll-thumb { position: absolute; left: 4px; top: 0; width: 7px; height: 237px; border-radius: 4px; background: #7b7b7b; }
.status { position: absolute; left: 0; bottom: 0; width: 323px; height: 25px; box-sizing: border-box; background: #e8e8e7; border-top: 1px solid #c0c0be; border-right: 1px solid #c0c0be; border-radius: 0 2px 0 0; font-size: 13.4px; padding-left: 4px; line-height: 23px; color: #2e3436; white-space: nowrap; }
</style>
